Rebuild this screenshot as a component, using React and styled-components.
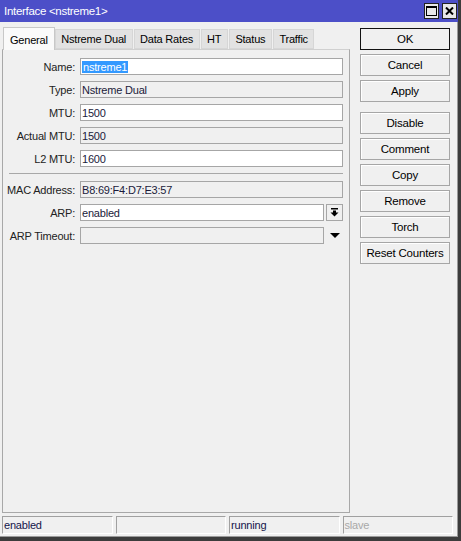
import React from 'react'
import styled, { createGlobalStyle } from 'styled-components'

const Global = createGlobalStyle`
  html, body { margin: 0; padding: 0; background: #f0f0f0; }
  body { font-family: "Liberation Sans", Arial, sans-serif; font-size: 11px; letter-spacing: -0.2px; color: #000; }
`

const fields = [
  { label: 'Name:', value: 'nstreme1', edit: true, selected: true },
  { label: 'Type:', value: 'Nstreme Dual' },
  { label: 'MTU:', value: '1500', edit: true },
  { label: 'Actual MTU:', value: '1500' },
  { label: 'L2 MTU:', value: '1600', edit: true },
]

const tabs = ['General', 'Nstreme Dual', 'Data Rates', 'HT', 'Status', 'Traffic']
const buttons = [['OK', 'Cancel', 'Apply'], ['Disable', 'Comment', 'Copy', 'Remove', 'Torch', 'Reset Counters']]

const App = () => {
  return (
    <>
      <Global />
      <Window>
        <TitleBar>
          <Title>Interface &lt;nstreme1&gt;</Title>
          <TitleButtons>
            <TitleBtn>
              <svg width="11" height="10" viewBox="0 0 11 10">
                <rect x="0.5" y="0.5" width="10" height="9" fill="none" stroke="#000" />
                <rect x="0" y="0" width="11" height="2" fill="#000" />
              </svg>
            </TitleBtn>
            <TitleBtn>
              <svg width="9" height="8" viewBox="0 0 9 8">
                <path d="M1 0.5 L8 7.5 M8 0.5 L1 7.5" stroke="#000" strokeWidth="2" />
              </svg>
            </TitleBtn>
          </TitleButtons>
        </TitleBar>
        <Main>
          <Left>
            <Tabs>
              {tabs.map((t, i) => (
                <Tab key={t} $active={i === 0}>{t}</Tab>
              ))}
            </Tabs>
            <Panel>
              {fields.map(f => (
                <Row key={f.label}>
                  <Label>{f.label}</Label>
                  <Field $edit={f.edit}>
                    {f.selected ? <Sel>{f.value}</Sel> : f.value}
                  </Field>
                </Row>
              ))}
              <Separator />
              <Row>
                <Label>MAC Address:</Label>
                <Field>B8:69:F4:D7:E3:57</Field>
              </Row>
              <Row>
                <Label>ARP:</Label>
                <Field $edit>enabled</Field>
                <DropBtn>
                  <svg width="9" height="9" viewBox="0 0 9 9">
                    <rect x="1" y="0" width="7" height="1.5" fill="#000" />
                    <path d="M3 2.5 H6 V4.5 H8.5 L4.5 8.5 L0.5 4.5 H3 Z" fill="#000" />
                  </svg>
                </DropBtn>
              </Row>
              <Row>
                <Label>ARP Timeout:</Label>
                <Field />
                <Arrow>
                  <svg width="10" height="5" viewBox="0 0 10 5">
                    <path d="M0 0 H10 L5 5 Z" fill="#000" />
                  </svg>
                </Arrow>
              </Row>
            </Panel>
          </Left>
          <Right>
            {buttons.map((group, gi) => (
              <BtnGroup key={gi}>
                {group.map(b => (
                  <Btn key={b} $default={b === 'OK'}>{b}</Btn>
                ))}
              </BtnGroup>
            ))}
          </Right>
        </Main>
        <StatusBar>
          <Cell>enabled</Cell>
          <Cell></Cell>
          <Cell>running</Cell>
          <Cell $muted>slave</Cell>
        </StatusBar>
      </Window>
    </>
  )
}

export default App

const Window = styled.div`
  width: 461px;
  height: 541px;
  box-sizing: border-box;
  display: flex;
  flex-direction: column;
  background: #f0f0f0;
  border-right: 3px solid #3c3c3c;
  border-bottom: 4px solid #3c3c3c;
  box-shadow: inset -1px -1px 0 #9a9a9a;
  overflow: hidden;
`
const TitleBar = styled.div`
  height: 22px;
  flex: none;
  display: flex;
  align-items: center;
  justify-content: space-between;
  background: #4c4fc8;
  padding: 0 1px 0 4px;
`
const Title = styled.div`
  color: #fff;
  font-size: 11.5px;
  letter-spacing: -0.3px;
`
const TitleButtons = styled.div`
  display: flex;
  gap: 3px;
  align-items: center;
`
const TitleBtn = styled.div`
  width: 15px;
  height: 16px;
  box-sizing: border-box;
  background: #e8e8e8;
  border: 1px solid #222;
  display: flex;
  align-items: center;
  justify-content: center;
`
const Main = styled.div`
  flex: 1;
  display: flex;
  gap: 10px;
  padding: 4px 0 0 2px;
  min-height: 0;
`
const Left = styled.div`
  width: 348px;
  display: flex;
  flex-direction: column;
`
const Tabs = styled.div`
  display: flex;
  align-items: flex-end;
  height: 23px;
  padding-left: 1px;
`
const Tab = styled.div`
  box-sizing: border-box;
  height: ${p => (p.$active ? '23px' : '20px')};
  padding: 0 ${p => (p.$active ? '6px' : '5.5px')};
  margin-right: ${p => (p.$active ? '0' : '1px')};
  display: flex;
  align-items: center;
  background: ${p => (p.$active ? '#fafafa' : '#e2e2e2')};
  border: 1px solid ${p => (p.$active ? '#c8c8c8' : '#d6d6d6')};
  border-bottom: ${p => (p.$active ? 'none' : '1px solid #d6d6d6')};
  position: relative;
  top: ${p => (p.$active ? '1px' : '0')};
  padding-top: ${p => (p.$active ? '1px' : '0')};
`
const Panel = styled.div`
  flex: 1;
  box-sizing: border-box;
  border: 1px solid #a8a8a8;
  border-top-color: #d0d0d0;
  padding: 8px 6px 0 0;
  display: flex;
  flex-direction: column;
  gap: 6px;
`
const Row = styled.div`
  display: flex;
  align-items: center;
  height: 17px;
`
const Label = styled.div`
  width: 72px;
  flex: none;
  text-align: right;
  padding-right: 5px;
  white-space: nowrap;
  color: #222;
`
const Field = styled.div`
  flex: 1;
  height: 17px;
  box-sizing: border-box;
  border: 1px solid #a6a6a6;
  background: ${p => (p.$edit ? '#fff' : '#f0f0f0')};
  display: flex;
  align-items: center;
  padding-left: 1px;
  color: #1b1b3a;
`
const Sel = styled.span`
  background: #3399ff;
  color: #fff;
  padding: 0 1px;
`
const Separator = styled.div`
  height: 1px;
  background: #a8a8a8;
  margin: 0 0 1px 6px;
`
const DropBtn = styled.div`
  width: 17px;
  height: 17px;
  margin-left: 2px;
  box-sizing: border-box;
  border: 1px solid #a6a6a6;
  background: #f0f0f0;
  display: flex;
  align-items: center;
  justify-content: center;
`
const Arrow = styled.div`
  width: 17px;
  margin-left: 2px;
  display: flex;
  align-items: center;
  justify-content: center;
`
const Right = styled.div`
  width: 90px;
  display: flex;
  flex-direction: column;
  gap: 10px;
  padding-top: 2px;
`
const BtnGroup = styled.div`
  display: flex;
  flex-direction: column;
  gap: 4px;
`
const Btn = styled.div`
  height: 22px;
  box-sizing: border-box;
  display: flex;
  align-items: center;
  justify-content: center;
  font-size: 11.5px;
  background: #f0f0f0;
  border: 1px solid ${p => (p.$default ? '#111' : '#a6a6a6')};
  box-shadow: ${p => (p.$default ? 'none' : 'inset 1px 1px 0 #fff')};
`
const StatusBar = styled.div`
  flex: none;
  display: flex;
  gap: 3px;
  padding: 3px 5px 3px 2px;
`
const Cell = styled.div`
  flex: 1;
  height: 18px;
  box-sizing: border-box;
  border-top: 1px solid #a0a0a0;
  border-left: 1px solid #a0a0a0;
  border-right: 1px solid #fff;
  border-bottom: 1px solid #fff;
  display: flex;
  align-items: center;
  padding-left: 1px;
  color: ${p => (p.$muted ? '#a8a8a8' : '#14144a')};
`
